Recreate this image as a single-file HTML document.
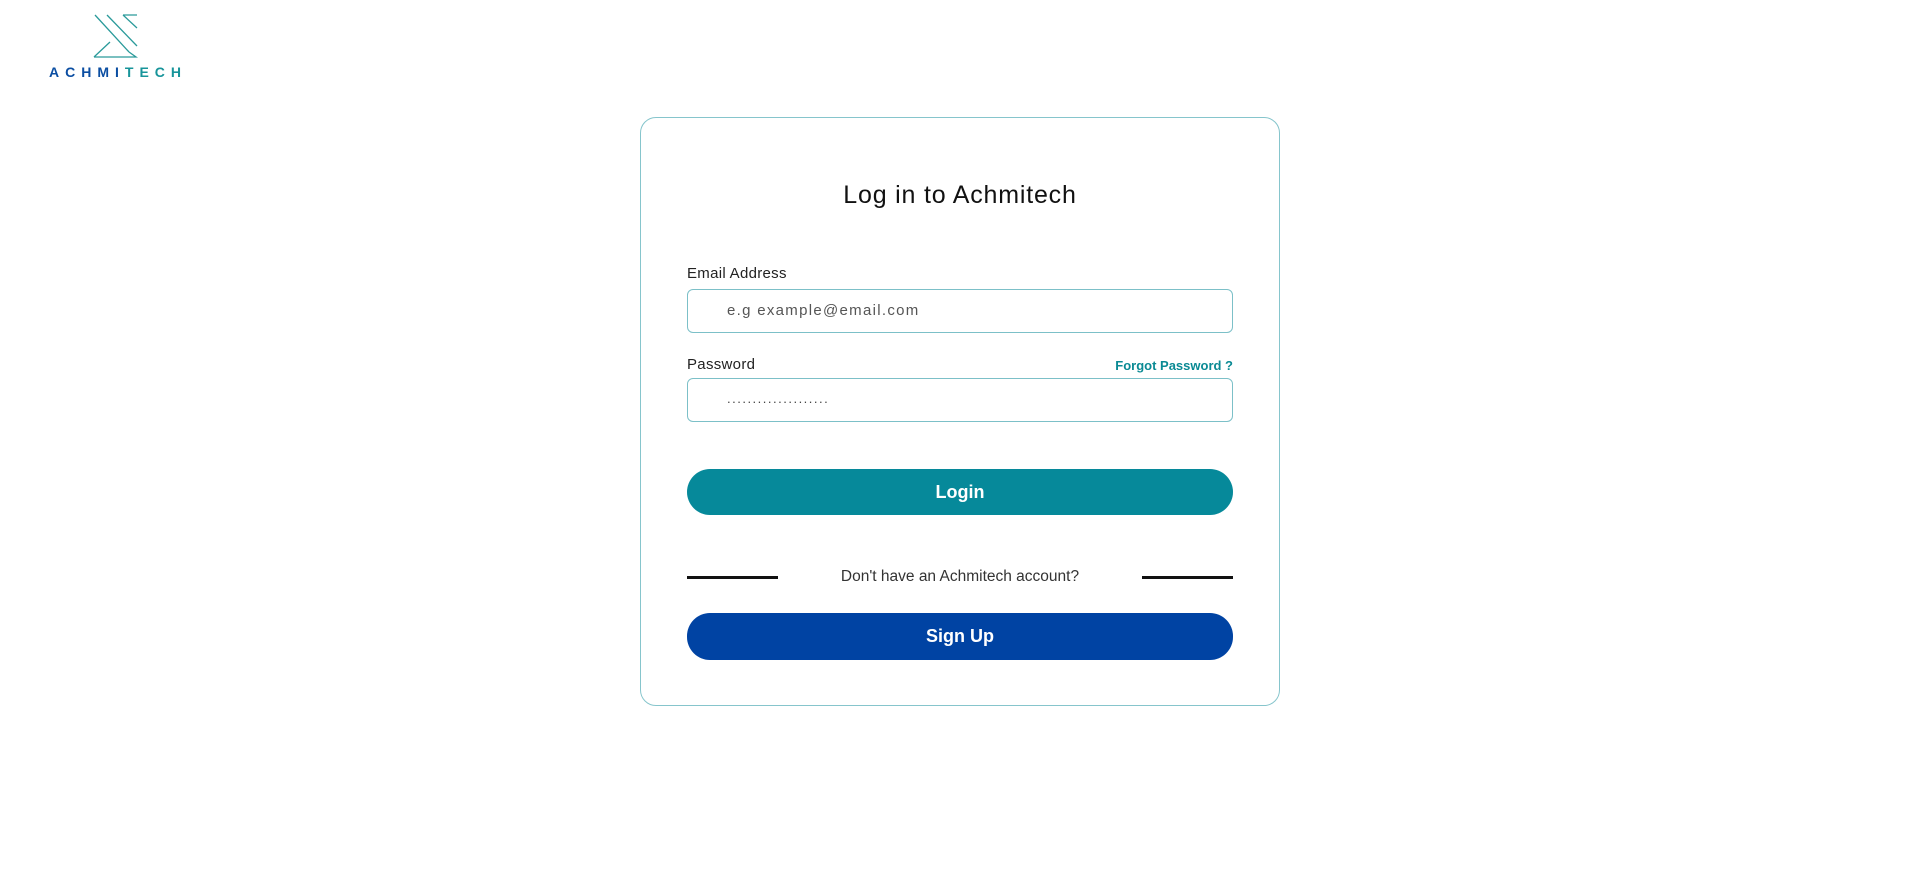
<!DOCTYPE html>
<html><head><meta charset="utf-8"><style>
*{box-sizing:border-box;margin:0;padding:0}
body{width:1919px;height:892px;background:#fff;font-family:"Liberation Sans",sans-serif;position:relative;overflow:hidden}
.abs{position:absolute}
.card{left:640px;top:117px;width:640px;height:589px;border:1px solid #86c5cc;border-radius:16px}
.title{left:640px;width:640px;top:181px;text-align:center;font-size:25px;color:#111;letter-spacing:0.8px}
.lbl{left:687px;font-size:15px;color:#222;letter-spacing:0.3px}
.inp{left:687px;width:546px;height:44px;border:1px solid #7cc0c8;border-radius:6px}
.btn{left:687px;width:546px;height:46px;border-radius:23px;color:#fff;font-weight:bold;font-size:18px;text-align:center;line-height:46px}
.line{height:3px;background:#111;width:91px;top:576px}
</style></head><body>
<svg class="abs" style="left:92px;top:14px" width="48" height="44" viewBox="0 0 48 44" fill="none" stroke="#2a9a9a" stroke-width="1.3">
<path d="M3 1 L37 38"/><path d="M15 1 L45 32"/><path d="M31 1 L45 1 M31 1 L45 14"/>
<path d="M2 43 L44 43 L37 38 M2 43 L18 28"/>
</svg>
<div class="abs" style="left:49px;top:64px;font-size:14px;font-weight:bold;letter-spacing:6px;color:#0b4ea2">ACHMI<span style="color:#17949a">TECH</span></div>
<div class="abs card"></div>
<div class="abs title">Log in to Achmitech</div>
<div class="abs lbl" style="top:265px">Email Address</div>
<div class="abs inp" style="top:289px"></div>
<div class="abs" style="left:727px;top:302px;font-size:15px;color:#555;letter-spacing:1.3px">e.g example@email.com</div>
<div class="abs lbl" style="top:356px">Password</div>
<div class="abs" style="left:1080px;width:153px;text-align:right;top:358px;font-size:13px;font-weight:bold;color:#0a8a94">Forgot Password ?</div>
<div class="abs inp" style="top:378px"></div>
<div class="abs" style="left:727px;top:391px;font-size:13px;color:#444;letter-spacing:1.5px">....................</div>
<div class="abs btn" style="top:469px;background:#06899a">Login</div>
<div class="abs line" style="left:687px"></div>
<div class="abs line" style="left:1142px"></div>
<div class="abs" style="left:778px;width:364px;text-align:center;top:568px;font-size:15.5px;color:#333">Don't have an Achmitech account?</div>
<div class="abs btn" style="top:613px;height:47px;line-height:47px;background:#0043a3">Sign Up</div>
</body></html>
